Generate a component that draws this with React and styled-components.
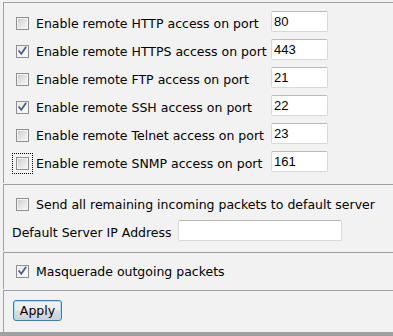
import React from "react";
import styled, { createGlobalStyle } from "styled-components";

const Global = createGlobalStyle`
  html, body { margin: 0; padding: 0; background: #f2f2f2; }
  body {
    font-family: "DejaVu Sans", Verdana, sans-serif;
    font-size: 12.5px;
    color: #000;
  }
`;

const Page = styled.div`
  width: 393px;
  padding-top: 2px;
  background: #f2f2f2;
`;

const Section = styled.section`
  margin-left: 3px;
  border-top: 1px solid #a0a0a0;
  border-left: 1px solid #a0a0a0;
  padding: ${(p) => p.$pad};
  & + & { margin-top: 1px; }
`;

const LastSection = styled(Section)`
  margin-top: 1px;
`;

const PortRow = styled.div`
  display: grid;
  grid-template-columns: 255px 57px;
  align-items: center;
  height: 28px;
  padding-left: 12px;
`;

const CheckRow = styled.div`
  display: flex;
  align-items: center;
  height: 28px;
  padding-left: 12px;
`;

const FieldRow = styled.div`
  display: grid;
  grid-template-columns: 166px 164px;
  align-items: center;
  height: 28px;
  padding-left: 8px;
`;

const Label = styled.label`
  display: flex;
  align-items: center;
  gap: 7px;
  white-space: nowrap;
`;

const Box = styled.span`
  position: relative;
  display: inline-block;
  box-sizing: border-box;
  width: 13px;
  height: 13px;
  flex: none;
  border: 1px solid #8e8f8f;
  background: ${(p) =>
    p.$checked
      ? "linear-gradient(135deg, #e4e4e4 0%, #f7f7f7 60%, #ffffff 100%)"
      : "linear-gradient(135deg, #c9c9c9 0%, #e6e6e6 55%, #f8f8f8 100%)"};
  box-shadow: inset 0 0 0 1px #f4f4f4;
  outline: ${(p) => (p.$focus ? "1px dotted #000" : "none")};
  outline-offset: 3px;
  svg { position: absolute; left: 0; top: 0; }
`;

const TextBox = styled.input`
  box-sizing: border-box;
  width: ${(p) => p.$w || "57px"};
  height: 21px;
  margin: 0 0 3px 0;
  padding: 0 0 0 2px;
  border: 1px solid #d6d9dc;
  border-top-color: #b8bbbf;
  border-radius: 2px;
  background: #fff;
  font-family: "Liberation Sans", Arial, sans-serif;
  font-size: 13px;
  color: #000;
  outline: none;
`;

const Button = styled.button`
  box-sizing: border-box;
  width: 49px;
  height: 21px;
  padding: 0;
  border: 1px solid #3c7fb1;
  border-radius: 3px;
  background: linear-gradient(#f4f4f4 0%, #ebebeb 48%, #dddddd 52%, #cfcfcf 100%);
  box-shadow: inset 0 0 0 1px #a7e0f8;
  font-family: "DejaVu Sans", Verdana, sans-serif;
  font-size: 12.5px;
  color: #000;
  display: block;
`;

const Bar = styled.div`
  height: 4px;
  background: #a0a0a0;
`;

function Check({ checked, focus }) {
  return (
    <Box $checked={checked} $focus={focus}>
      {checked && (
        <svg width="11" height="11" viewBox="0 0 11 11">
          <path
            d="M2.2 5.2 L4.3 7.8 L8.6 1.6"
            fill="none"
            stroke="#4a5d99"
            strokeWidth="1.8"
            strokeLinecap="square"
          />
        </svg>
      )}
    </Box>
  );
}

const ports = [
  { name: "HTTP", port: "80", checked: false },
  { name: "HTTPS", port: "443", checked: true },
  { name: "FTP", port: "21", checked: false },
  { name: "SSH", port: "22", checked: true },
  { name: "Telnet", port: "23", checked: false },
  { name: "SNMP", port: "161", checked: false, focus: true },
];

export default function App() {
  return (
    <Page>
      <Global />
      <Section $pad="6px 0 6px 0">
        {ports.map((p) => (
          <PortRow key={p.name}>
            <Label>
              <Check checked={p.checked} focus={p.focus} />
              <span>Enable remote {p.name} access on port</span>
            </Label>
            <TextBox defaultValue={p.port} />
          </PortRow>
        ))}
      </Section>
      <Section $pad="5px 0 5px 0">
        <CheckRow>
          <Label>
            <Check />
            <span>Send all remaining incoming packets to default server</span>
          </Label>
        </CheckRow>
        <FieldRow>
          <span>Default Server IP Address</span>
          <TextBox $w="164px" defaultValue="" />
        </FieldRow>
      </Section>
      <Section $pad="4px 0 4px 0">
        <CheckRow>
          <Label>
            <Check checked />
            <span>Masquerade outgoing packets</span>
          </Label>
        </CheckRow>
      </Section>
      <LastSection $pad="9px 0 11px 9px">
        <Button>Apply</Button>
      </LastSection>
      <Bar />
    </Page>
  );
}
